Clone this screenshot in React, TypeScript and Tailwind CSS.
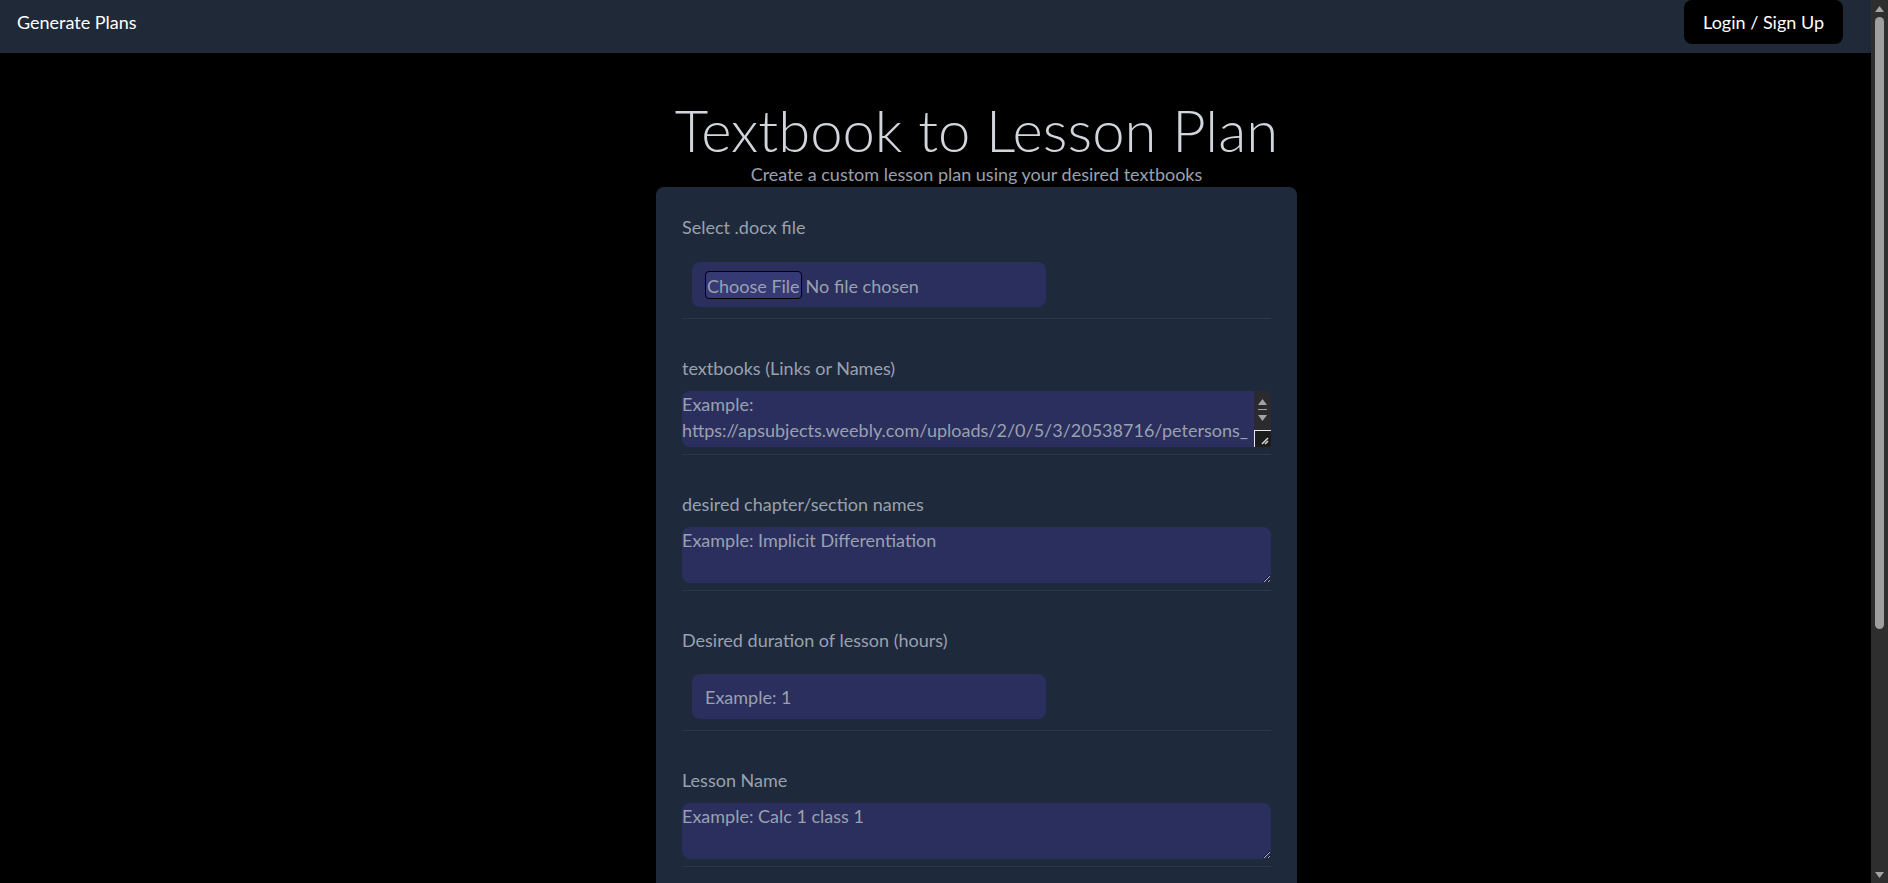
import React from "react";

const fieldLabel = "block text-lg leading-[27px] text-gray-400";
const boxInput =
  "ml-[10px] mt-[20px] block h-[45px] w-[354px] rounded-lg bg-[#2a2f5d] px-[13px] text-lg text-gray-400 outline-none placeholder:text-gray-400";
const boxArea =
  "mt-[9px] block h-[56px] w-full resize-y rounded-lg bg-[#2a2f5d] p-0 text-lg leading-[26px] text-gray-400 outline-none placeholder:text-gray-400";
const divider = "border-t border-[#2c3748]";

const Arrow = ({ down }: { down?: boolean }) => (
  <svg width="9" height="6" viewBox="0 0 9 6" className="block">
    <polygon
      points={down ? "0,0 9,0 4.5,6" : "4.5,0 9,6 0,6"}
      fill="#a3a3a3"
    />
  </svg>
);

// the page scrollbar, drawn since the window one isn't shown
const PageScrollbar = () => (
  <div className="flex h-screen w-[17px] shrink-0 flex-col items-center bg-[#2e2e2e]">
    <div className="flex h-[17px] items-center">
      <Arrow />
    </div>
    <div className="flex-1 w-full px-[4px]">
      <div className="h-[612px] rounded-full bg-[#9f9f9f]" />
    </div>
    <div className="flex h-[17px] items-center">
      <Arrow down />
    </div>
  </div>
);

const AreaScrollbar = () => (
  <div className="absolute right-0 top-0 flex h-full w-[17px] flex-col items-center rounded-tr-lg bg-[#2b2b2f]">
    <div className="mt-[8px]">
      <Arrow />
    </div>
    <div className="mt-[4px] h-[1px] w-[9px] bg-[#a3a3a3]" />
    <div className="mt-[5px]">
      <Arrow down />
    </div>
    <div className="mt-auto flex h-[17px] w-[17px] items-end justify-end border-l border-t border-gray-200 bg-[#1c1c1c] p-[2px]">
      <svg width="8" height="8" viewBox="0 0 8 8">
        <path d="M7 1 L1 7 M7 4 L4 7" stroke="#d4d4d4" strokeWidth="1.5" />
      </svg>
    </div>
  </div>
);

const TextField = ({
  label,
  placeholder,
  scroll,
}: {
  label: string;
  placeholder: string;
  scroll?: boolean;
}) => {
  return (
    <div className="mt-[36px]">
      <label className={fieldLabel}>{label}</label>
      {scroll ? (
        <div className="relative mt-[9px] h-[56px]">
          <textarea
            className={boxArea + " mt-0 h-full pr-[17px] [overflow-wrap:anywhere]"}
            placeholder={placeholder}
          />
          <AreaScrollbar />
        </div>
      ) : (
        <textarea className={boxArea} placeholder={placeholder} />
      )}
      <div className={"mt-[7px] " + divider} />
    </div>
  );
};

const App = () => {
  return (
    <div className="flex h-screen bg-black font-['Lato','Noto_Sans',sans-serif] [color-scheme:dark]">
      <div className="h-screen flex-1 overflow-y-auto [scrollbar-width:none]">
        <nav className="flex h-[53px] items-start justify-between bg-[#1f2937] pl-[17px] pr-[28px]">
          <a href="#" className="mt-[9px] text-lg leading-[27px] text-white">
            Generate Plans
          </a>
          <button className="h-[44px] rounded-lg bg-black px-[19px] text-lg text-white">
            Login / Sign Up
          </button>
        </nav>

        <main className="flex flex-col items-center pb-[110px] pl-[82px]">
          <h1 className="mt-[48px] text-[58px] leading-[58px] font-light text-gray-300">
            Textbook to Lesson Plan
          </h1>
          <p className="mt-px text-lg leading-[28px] text-gray-400">
            Create a custom lesson plan using your desired textbooks
          </p>

          <form className="-mt-px w-[641px] rounded-lg bg-[#1e293b] px-[26px] pb-[30px] pt-[27px]">
            <div>
              <label className={fieldLabel}>Select .docx file</label>
              <input
                type="file"
                accept=".docx"
                className="ml-[10px] mt-[21px] block h-[45px] w-[354px] rounded-lg bg-[#2a2f5d] px-[13px] pt-[9px] text-lg leading-[26px] text-gray-400 file:mr-[4px] file:h-[28px] file:rounded file:border file:border-solid file:border-black file:bg-[#353a75] file:px-px file:text-lg file:text-gray-400"
              />
              <div className={"mt-[11px] " + divider} />
            </div>

            <TextField
              label="textbooks (Links or Names)"
              placeholder="Example: https://apsubjects.weebly.com/uploads/2/0/5/3/20538716/petersons_master_ap_calculus.pdf"
              scroll
            />
            <TextField
              label="desired chapter/section names"
              placeholder="Example: Implicit Differentiation"
            />

            <div className="mt-[36px]">
              <label className={fieldLabel}>
                Desired duration of lesson (hours)
              </label>
              <input type="number" className={boxInput} placeholder="Example: 1" />
              <div className={"mt-[11px] " + divider} />
            </div>

            <TextField label="Lesson Name" placeholder="Example: Calc 1 class 1" />
            <TextField
              label="Additional instructions"
              placeholder="Example: Include practice problems"
            />

            <button
              type="button"
              className="mt-[30px] h-[45px] w-full rounded-lg bg-black text-lg text-white"
            >
              Generate Lesson Plan
            </button>
          </form>
        </main>
      </div>
      <PageScrollbar />
    </div>
  );
};

export default App;
